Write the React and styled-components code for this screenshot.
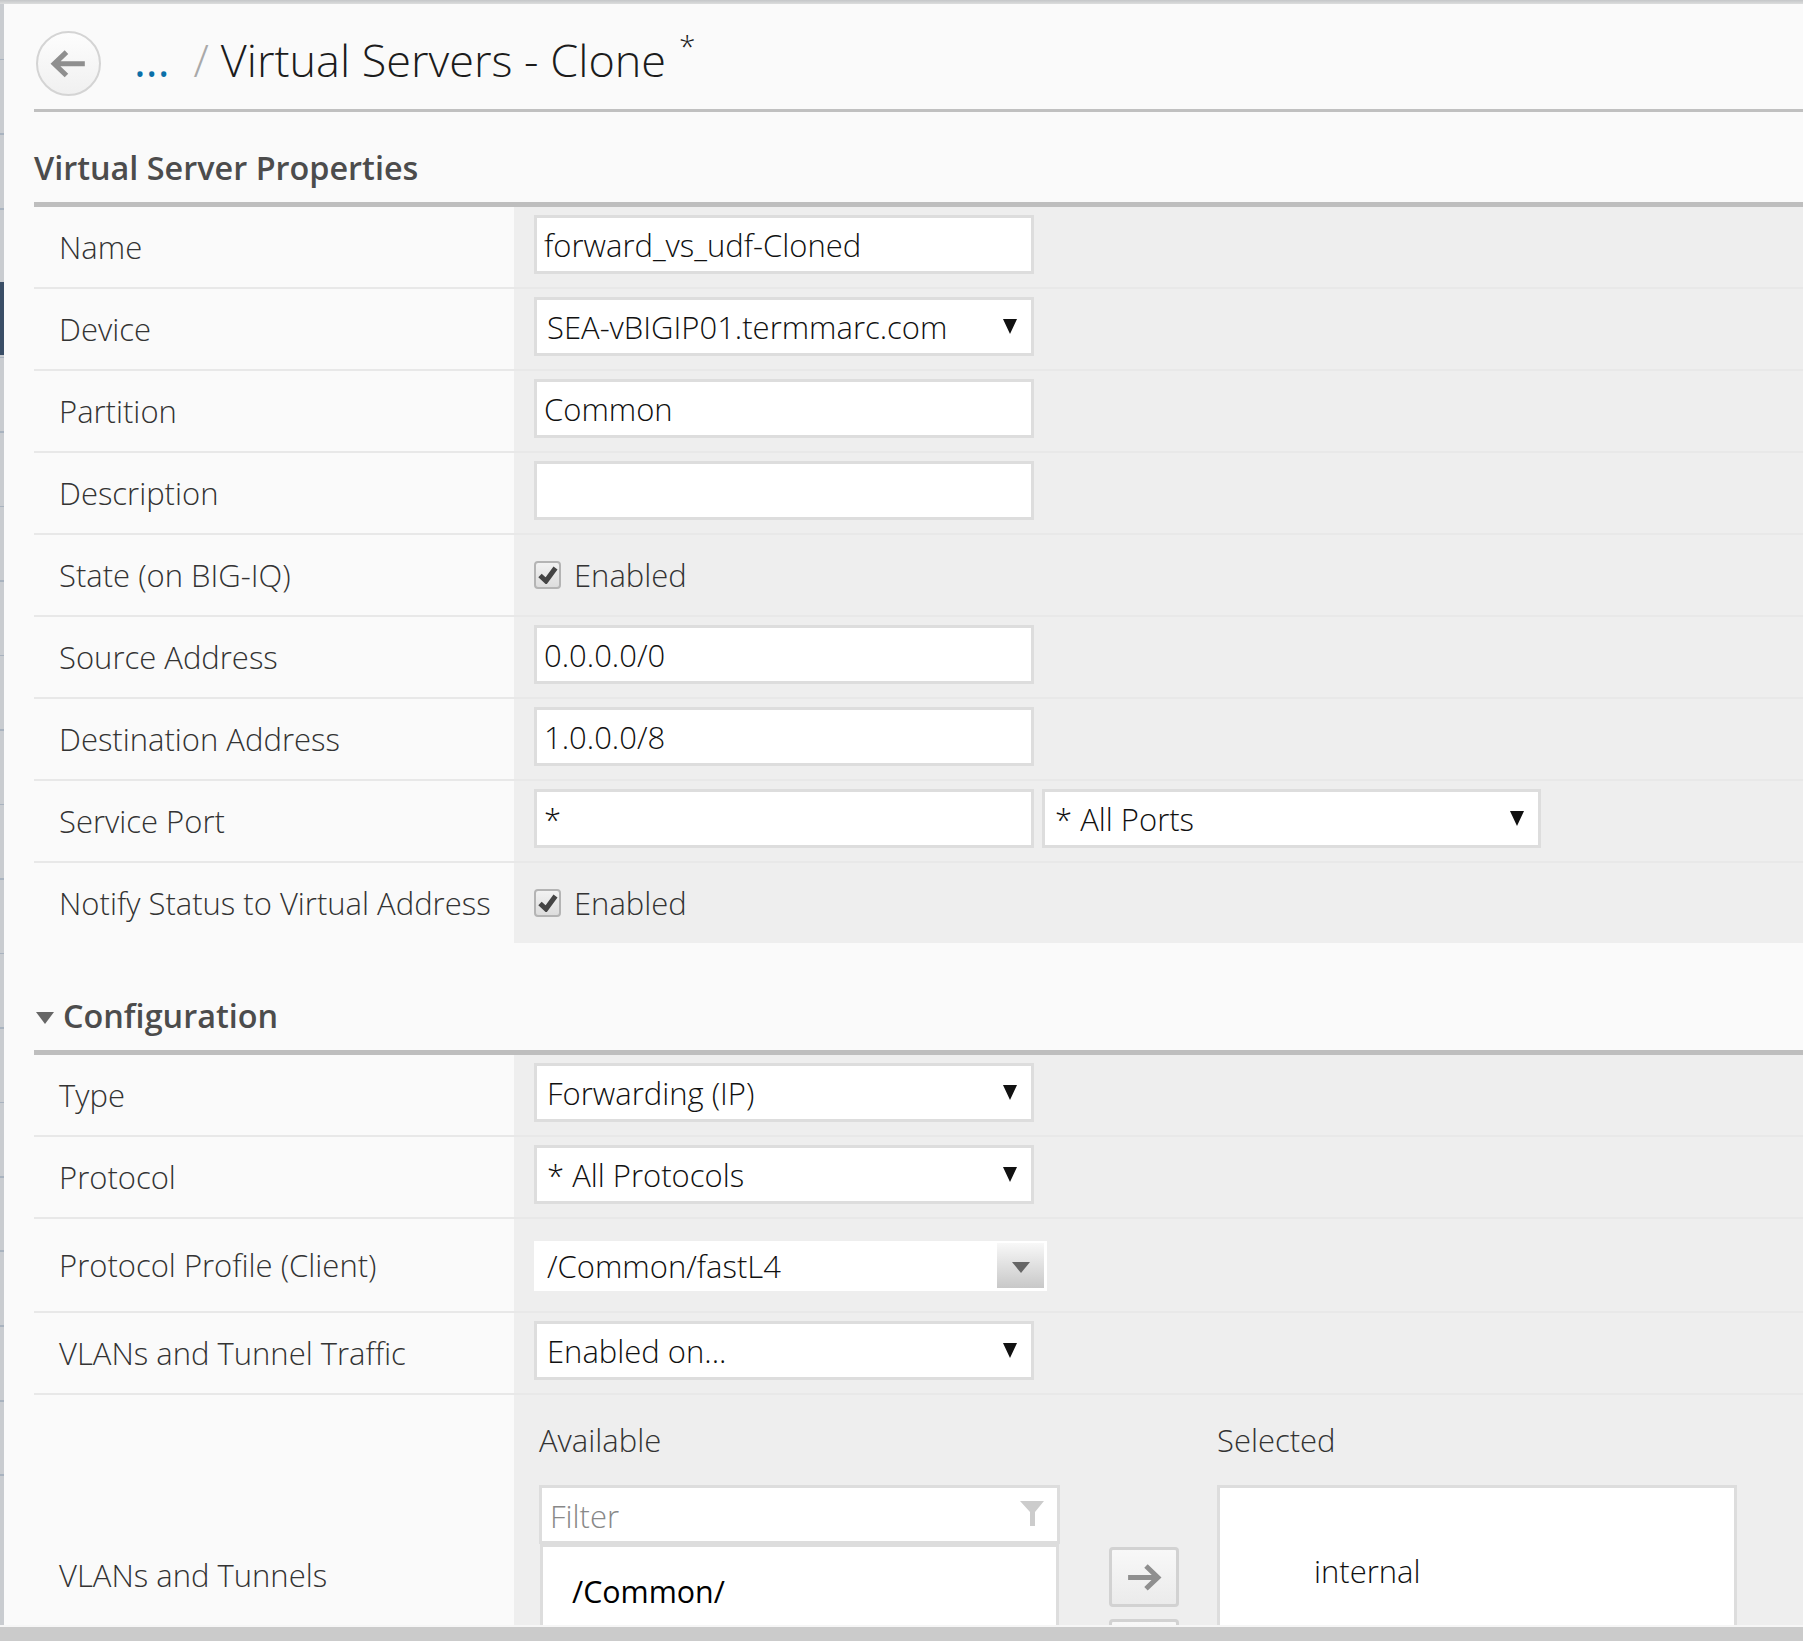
import React from "react";
import styled, { createGlobalStyle } from "styled-components";

const Global = createGlobalStyle`
  html, body { margin: 0; padding: 0; background: #fafafa; }
  * { box-sizing: border-box; }
`;

const Page = styled.div`
  width: 1803px;
  height: 1641px;
  display: flex;
  flex-direction: column;
  overflow: hidden;
  font-family: "Open Sans", "Liberation Sans", sans-serif;
  font-weight: 300;
  color: #222;
  background: #fafafa;
`;
const TopEdge = styled.div`
  height: 4px;
  flex: none;
  background: linear-gradient(#c4c6c8, #dcdddd);
`;
const Middle = styled.div`
  flex: 1;
  min-height: 0;
  display: flex;
`;
const Rail = styled.div`
  width: 4px;
  flex: none;
  background:
    linear-gradient(transparent 0 1480px, #c9ccd0 1480px),
    repeating-linear-gradient(#c9ccd0 0 54.5px, #a9b3bf 54.5px 56.5px, #c9ccd0 56.5px 74.5px);
  display: flex;
  flex-direction: column;
`;
const RailMark = styled.div`
  height: 73px;
  margin-top: 278px;
  background: #3a4e66;
`;
const Content = styled.main`
  flex: 1;
  min-width: 0;
  overflow: hidden;
  padding-left: 30px;
`;
const Header = styled.header`
  height: 105px;
  display: flex;
  align-items: center;
  padding-top: 14px;
`;
const BackButton = styled.button`
  width: 65px;
  height: 65px;
  margin-left: 2px;
  padding: 0;
  border: 2px solid #d4d4d4;
  border-radius: 50%;
  background: linear-gradient(#fdfdfd, #f0f0f0);
  display: flex;
  align-items: center;
  justify-content: center;
`;
const Crumbs = styled.div`
  display: flex;
  align-items: baseline;
  margin: -8px 0 0 33px;
  font-size: 45px;
  color: #1c1c1c;
  white-space: nowrap;
`;
const Dots = styled.span`
  color: #0a6fa8;
  font-weight: 400;
`;
const Slash = styled.span`
  color: #a9a9a9;
  margin: 0 12px 0 24px;
`;
const Star = styled.span`
  font-size: 30px;
  line-height: 0;
  margin-left: 13px;
  position: relative;
  top: -20px;
`;
const Rule = styled.div`
  height: ${(p) => p.$h}px;
  background: ${(p) => p.$c};
`;
const SectionTitle = styled.h2`
  margin: 0;
  height: ${(p) => p.$h}px;
  padding-top: ${(p) => p.$pad}px;
  display: flex;
  align-items: center;
  gap: 9px;
  font-size: 32.4px;
  font-weight: 600;
  color: #4c4c4c;
  white-space: nowrap;
`;
const Row = styled.div`
  display: flex;
  min-height: ${(p) => p.$h || 82}px;
  border-bottom: ${(p) => (p.$last ? "0" : "2px solid #e8e8e8")};
`;
const Label = styled.div`
  width: 480px;
  flex: none;
  padding-left: 25px;
  font-size: 31px;
  color: #333;
  display: flex;
  align-items: center;
  white-space: nowrap;
`;
const Field = styled.div`
  flex: 1;
  background: #eee;
  padding-left: 20px;
  display: flex;
  align-items: ${(p) => p.$align || "center"};
  gap: 8px;
  font-size: 31px;
`;
const TextInput = styled.input`
  width: 500px;
  height: 59px;
  margin-bottom: 5px;
  border: 3px solid #ddd;
  background: #fff;
  padding: 0 7px;
  font: inherit;
  color: #111;
  outline: none;
`;
const SelectBox = styled.div`
  width: ${(p) => p.$w || 500}px;
  height: 59px;
  margin-bottom: 5px;
  border: 3px solid #ddd;
  background: #fff;
  padding: 0 14px 0 10px;
  display: flex;
  align-items: center;
  justify-content: space-between;
  color: #111;
`;
const SelectArrow = styled.span`
  width: 0;
  height: 0;
  border-left: 7.5px solid transparent;
  border-right: 7.5px solid transparent;
  border-top: 15px solid #111;
`;
const CheckLine = styled.label`
  display: flex;
  align-items: center;
  gap: 13px;
  color: #333;
`;
const CheckBox = styled.span`
  width: 27px;
  height: 28px;
  border: 2px solid #b4b4b4;
  border-radius: 4px;
  background: linear-gradient(#f2f2f2, #ddd);
  display: flex;
  align-items: center;
  justify-content: center;
`;
const Combo = styled.div`
  width: 513px;
  height: 50px;
  margin-top: 1px;
  background: #fff;
  padding: 2px 3px 2px 13px;
  display: flex;
  align-items: center;
  justify-content: space-between;
  color: #111;
`;
const ComboButton = styled.span`
  width: 47px;
  height: 45px;
  background: linear-gradient(#f8f8f8, #c8c8c8);
  display: flex;
  align-items: center;
  justify-content: center;
`;
const SmallArrow = styled.span`
  width: 0;
  height: 0;
  margin-top: 4px;
  border-left: 9px solid transparent;
  border-right: 9px solid transparent;
  border-top: 11px solid #666;
`;
const Collapse = styled.span`
  width: 0;
  height: 0;
  margin-left: 2px;
  margin-top: 6px;
  border-left: 9px solid transparent;
  border-right: 9px solid transparent;
  border-top: 12px solid #666;
`;
const Shuttle = styled.div`
  padding-left: 5px;
  display: flex;
  height: 360px;
`;
const ShuttleColumn = styled.div`
  width: ${(p) => p.$w}px;
  flex: none;
`;
const ShuttleHeading = styled.div`
  height: 90px;
  padding-top: 24px;
  font-size: 31px;
  line-height: 42px;
  color: #333;
`;
const FilterBox = styled.div`
  height: 59px;
  border: 3px solid #ddd;
  background: #fff;
  display: flex;
  align-items: center;
  justify-content: space-between;
  padding: 3px 12px 0 8px;
  color: #888;
`;
const FilterGlyph = styled.svg`
  margin-top: -5px;
`;
const ListBox = styled.div`
  height: 200px;
  margin: 0 1px;
  border: solid #ddd;
  border-width: 3px 3px 0;
  background: #fff;
  padding: 22px 0 0 29px;
  color: #000;
  font-size: 30.4px;
  font-weight: 400;
  line-height: 46px;
`;
const ListItem = styled.div`
  font-size: 31px;
  font-weight: 300;
  margin-left: 63px;
`;
const MoveButtons = styled.div`
  width: 157px;
  flex: none;
  padding: 152px 0 0 49px;
  display: flex;
  flex-direction: column;
  gap: 12px;
`;
const MoveButton = styled.button`
  width: 70px;
  height: 60px;
  flex: none;
  padding: 0;
  border: 3px solid #d2d2d2;
  border-radius: 4px;
  background: linear-gradient(#f8f8f8, #ebebeb);
  display: flex;
  align-items: center;
  justify-content: center;
`;
const SelectedBox = styled.div`
  height: 250px;
  border: 3px solid #ddd;
  background: #fff;
  padding: 58px 0 0 94px;
  color: #111;
  line-height: 50px;
`;
const BottomEdge = styled.div`
  height: 16px;
  flex: none;
  border-top: 2px solid #f6f6f6;
  background: #cbcbcb;
`;

const Select = ({ children, w }) => (
  <SelectBox $w={w}>
    <span>{children}</span>
    <SelectArrow />
  </SelectBox>
);

const Check = () => (
  <CheckLine>
    <CheckBox>
      <svg width="20" height="18" viewBox="0 0 20 18">
        <path d="M2 9.5 L8 15 L17.5 2" fill="none" stroke="#444" strokeWidth="5" />
      </svg>
    </CheckBox>
    Enabled
  </CheckLine>
);

const ArrowIcon = ({ flip, size = 36, color = "#8f8f8f" }) => (
  <svg width={size} height={size * 0.8} viewBox="0 0 36 29" style={flip ? { transform: "scaleX(-1)" } : undefined}>
    <path d="M2 14.5 H31 M20 3 L32 14.5 L20 26" fill="none" stroke={color} strokeWidth="5" />
  </svg>
);

const FilterIcon = () => (
  <FilterGlyph width="26" height="27" viewBox="0 0 26 27">
    <path d="M1 1 H25 L16 12 V26 H11 V12 Z" fill="#ccc" />
  </FilterGlyph>
);

const properties = [
  ["Name", <TextInput key="a" readOnly value="forward_vs_udf-Cloned" />],
  ["Device", <Select key="a">SEA-vBIGIP01.termmarc.com</Select>],
  ["Partition", <TextInput key="a" readOnly value="Common" />],
  ["Description", <TextInput key="a" readOnly value="" />],
  ["State (on BIG-IQ)", <Check key="a" />],
  ["Source Address", <TextInput key="a" readOnly value="0.0.0.0/0" />],
  ["Destination Address", <TextInput key="a" readOnly value="1.0.0.0/8" />],
  [
    "Service Port",
    <React.Fragment key="a">
      <TextInput readOnly value="*" />
      <Select w={499}>* All Ports</Select>
    </React.Fragment>,
  ],
];

export default function App() {
  return (
    <Page>
      <Global />
      <TopEdge />
      <Middle>
        <Rail>
          <RailMark />
        </Rail>
        <Content>
          <Header>
            <BackButton aria-label="Back">
              <ArrowIcon flip size={37} />
            </BackButton>
            <Crumbs>
              <Dots>...</Dots>
              <Slash>/</Slash>
              Virtual Servers - Clone
              <Star>*</Star>
            </Crumbs>
          </Header>
          <Rule $h={3} $c="#c0c0c0" />
          <SectionTitle $h={90} $pad={20}>Virtual Server Properties</SectionTitle>
          <Rule $h={5} $c="#bebebe" />
          {properties.map(([label, field]) => (
            <Row key={label}>
              <Label>{label}</Label>
              <Field>{field}</Field>
            </Row>
          ))}
          <Row $last $h={80}>
            <Label>Notify Status to Virtual Address</Label>
            <Field>
              <Check />
            </Field>
          </Row>
          <SectionTitle $h={107} $pad={36}>
            <Collapse />
            Configuration
          </SectionTitle>
          <Rule $h={5} $c="#bebebe" />
          <Row>
            <Label>Type</Label>
            <Field>
              <Select>Forwarding (IP)</Select>
            </Field>
          </Row>
          <Row>
            <Label>Protocol</Label>
            <Field>
              <Select>* All Protocols</Select>
            </Field>
          </Row>
          <Row $h={94}>
            <Label>Protocol Profile (Client)</Label>
            <Field>
              <Combo>
                /Common/fastL4
                <ComboButton>
                  <SmallArrow />
                </ComboButton>
              </Combo>
            </Field>
          </Row>
          <Row>
            <Label>VLANs and Tunnel Traffic</Label>
            <Field>
              <Select>Enabled on...</Select>
            </Field>
          </Row>
          <Row $last $h={360}>
            <Label>VLANs and Tunnels</Label>
            <Field $align="flex-start">
              <Shuttle>
                <ShuttleColumn $w={521}>
                  <ShuttleHeading>Available</ShuttleHeading>
                  <FilterBox>
                    Filter
                    <FilterIcon />
                  </FilterBox>
                  <ListBox>
                    /Common/
                    <ListItem>external</ListItem>
                  </ListBox>
                </ShuttleColumn>
                <MoveButtons>
                  <MoveButton aria-label="Add">
                    <ArrowIcon />
                  </MoveButton>
                  <MoveButton aria-label="Remove">
                    <ArrowIcon flip />
                  </MoveButton>
                </MoveButtons>
                <ShuttleColumn $w={520}>
                  <ShuttleHeading>Selected</ShuttleHeading>
                  <SelectedBox>internal</SelectedBox>
                </ShuttleColumn>
              </Shuttle>
            </Field>
          </Row>
        </Content>
      </Middle>
      <BottomEdge />
    </Page>
  );
}
